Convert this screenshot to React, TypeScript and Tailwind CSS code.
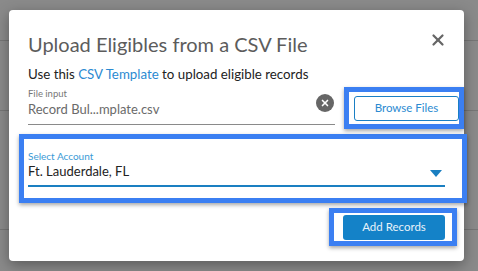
import { X } from "lucide-react";

const font = { fontFamily: "Lato, 'Noto Sans', sans-serif" };

function Highlight({ className, children }: { className: string; children: React.ReactNode }) {
  return (
    <div className={`border-[5px] border-[#3b7ff2] bg-white shadow-[0_2px_4px_rgba(0,0,0,0.35)] ${className}`}>
      {children}
    </div>
  );
}

export default function App() {
  return (
    <div className="relative w-[478px] h-[271px] overflow-hidden bg-[#8a8a8a]" style={font}>
      {/* page behind the overlay */}
      <div className="w-full">
        <div className="h-[41px] border-b border-[#767676] flex justify-end items-center pt-[8px]">
          <span className="text-[13px] text-[#555] -mr-[20px]">Rec</span>
        </div>
        <div className="h-[70px] border-b border-[#767676]"></div>
        <div className="h-[119px] border-b border-[#767676]"></div>
      </div>

      {/* dialog */}
      <div className="absolute left-[9px] top-[10px] w-[455px] h-[251px] bg-white rounded-[4px] shadow-[0_4px_14px_rgba(0,0,0,0.35)]">
        <div className="flex items-start justify-between pl-[19px] pr-[19px] pt-[20px]">
          <h1 className="text-[20px] leading-[28px] text-[#5c5c5c]">Upload Eligibles from a CSV File</h1>
          <button className="mt-[1px] mr-[-2px] text-[#666]">
            <X size={18} strokeWidth={3} />
          </button>
        </div>

        <p className="pl-[19px] mt-[8px] text-[13.3px] leading-[16px] text-[#222]">
          Use this <span className="text-[#2b8ad1]">CSV Template</span> to upload eligible records
        </p>

        <div className="flex items-start mt-[4px]">
          <div className="ml-[19px] w-[308px] mt-[2px] border-b border-[#8a8a8a] h-[37px] relative">
            <div className="text-[9.5px] leading-[12px] text-[#777]">File input</div>
            <div className="text-[13px] leading-[18px] text-[#6a6a6a]">Record Bul...mplate.csv</div>
            <div className="absolute right-[1px] top-[6px] w-[18px] h-[18px] rounded-full bg-[#666] flex items-center justify-center text-white">
              <X size={10} strokeWidth={4} />
            </div>
          </div>
          <Highlight className="ml-[9px] w-[120px] h-[42px] mt-[1px] flex items-center pl-[5px]">
            <button className="w-[105px] h-[25px] border border-[#1a7fc4] rounded-[3px] text-[11.5px] text-[#2b8ad1]">
              Browse Files
            </button>
          </Highlight>
        </div>

        <Highlight className="ml-[10px] mt-[5px] w-[448px] h-[69px] pl-[4px] pr-[17px] pt-[12px]">
          <div className="border-b-2 border-[#1a7fc1] h-[36px] relative">
            <div className="text-[10px] leading-[10px] text-[#3a9ad6]">Select Account</div>
            <div className="text-[13px] leading-[20px] text-[#222]">Ft. Lauderdale, FL</div>
            <svg className="absolute right-[3px] top-[19px]" width="12" height="7" viewBox="0 0 12 7">
              <path d="M0 0 L12 0 L6 7 Z" fill="#1a7fc1" />
            </svg>
          </div>
        </Highlight>

        <div className="flex justify-end pr-[7px] mt-[5px]">
          <Highlight className="w-[128px] h-[38px] flex items-center pl-[9px]">
            <button className="w-[102px] h-[25px] bg-[#1482c8] rounded-[3px] text-[11.5px] text-[#e8f2fa]">
              Add Records
            </button>
          </Highlight>
        </div>
      </div>
    </div>
  );
}
